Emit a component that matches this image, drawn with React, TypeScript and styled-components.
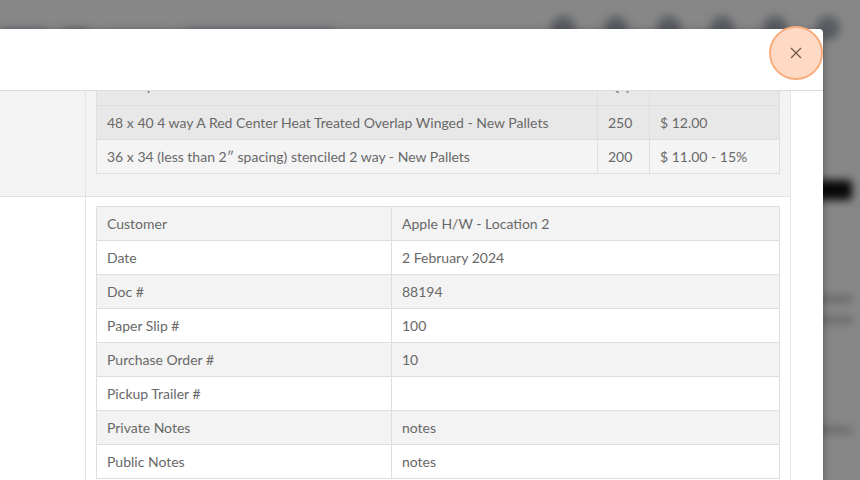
import { useEffect, useRef } from 'react'
import styled, { createGlobalStyle } from 'styled-components'

const GlobalStyle = createGlobalStyle`
  html, body {
    margin: 0;
    height: 100%;
    overflow: hidden;
  }
  body {
    font-family: Lato, "Open Sans", "Liberation Sans", sans-serif;
    background: #fff;
  }
`

const Screen = styled.div`
  position: relative;
  width: 100vw;
  height: 100vh;
  overflow: hidden;
  background: #fff;
`

// blurred page that sits behind the dialog
const Backdrop = styled.div`
  display: flex;
  flex-direction: column;
  height: 100%;
  filter: blur(4px);
`

const TopBar = styled.div`
  display: flex;
  align-items: center;
  height: 44px;
  padding: 6px 20px 0 0;
  gap: 18px;
`

const NavLink = styled.span<{ $w: number; $tone?: 'link' | 'dark' | 'field' }>`
  display: block;
  width: ${({ $w }) => $w}px;
  height: 9px;
  margin-top: 10px;
  border-radius: 3px;
  background: ${({ $tone }) =>
    $tone === 'dark' ? '#555' : $tone === 'field' ? '#f4f4f4' : '#5b7fa8'};
  opacity: ${({ $tone }) => ($tone === 'field' ? 1 : 0.45)};
`

const IconRow = styled.div`
  display: flex;
  gap: 29px;
  margin-left: auto;
`

const IconBlob = styled.span`
  display: block;
  width: 24px;
  height: 24px;
  border-radius: 50%;
  background: #3b4a63;
  opacity: 0.45;
`

const PageBody = styled.div`
  display: flex;
  justify-content: flex-end;
  flex: 1;
  padding-right: 8px;
`

const SideColumn = styled.div`
  display: flex;
  flex-direction: column;
  align-items: flex-end;
  width: 120px;
  padding-top: 130px;
`

const DarkButton = styled.span`
  display: block;
  width: 110px;
  height: 20px;
  border-radius: 3px;
  background: #111;
`

const TextLine = styled.span<{ $gap: number }>`
  display: block;
  width: 40px;
  height: 6px;
  margin-top: ${({ $gap }) => $gap}px;
  background: #bbb;
`

const Overlay = styled.div`
  position: absolute;
  inset: 0;
  background: rgba(0, 0, 0, 0.47);
`

const Modal = styled.div`
  position: absolute;
  top: 29px;
  left: -4px;
  width: 827px;
  bottom: 0;
  display: flex;
  flex-direction: column;
  background: #fff;
  border-radius: 4px 4px 0 0;
  box-shadow: 0 2px 8px rgba(0, 0, 0, 0.35);
`

const ModalHeader = styled.div`
  display: flex;
  justify-content: flex-end;
  align-items: flex-start;
  height: 61px;
  flex-shrink: 0;
  border-bottom: 1px solid #dcdcdc;
`

const CloseButton = styled.button`
  display: flex;
  align-items: center;
  justify-content: center;
  width: 54px;
  height: 54px;
  margin-top: -3px;
  padding: 0;
  border-radius: 50%;
  border: 2px solid #f8ab7b;
  background: #fedac5;
  cursor: pointer;
`

const ModalBody = styled.div`
  flex: 1;
  overflow: hidden;
  padding: 0 32px 0 4px;
`

const Sheet = styled.div`
  border-right: 1px solid #e4e4e4;
`

const Section = styled.div<{ $shade?: boolean }>`
  display: grid;
  grid-template-columns: 86px 1fr;
  background: ${({ $shade }) => ($shade ? '#f3f3f3' : '#fff')};
  border-bottom: 1px solid #e2e2e2;
`

const SideCell = styled.div`
  border-right: 1px solid #e4e4e4;
`

const MainCell = styled.div<{ $top: number; $bottom: number }>`
  padding: ${({ $top }) => $top}px 10px ${({ $bottom }) => $bottom}px 10px;
`

const Table = styled.table`
  width: 100%;
  border-collapse: collapse;
  table-layout: fixed;
  border: 1px solid #dedede;
  font-size: 14px;
  color: #686868;
`

const Row = styled.tr<{ $bg: string }>`
  background: ${({ $bg }) => $bg};
`

const Cell = styled.td`
  padding: 7px 10px;
  line-height: 19px;
  border: 1px solid #dedede;
  white-space: nowrap;
  overflow: hidden;
`

const HeadCell = styled.th`
  padding: 4px 10px 10px;
  line-height: 19px;
  border: 1px solid #dedede;
  text-align: left;
  font-weight: 700;
  color: #8a8a8a;
`

const items = [
  { desc: '48 x 40 4 way A Red Center Heat Treated Overlap Winged - New Pallets', qty: 250, price: '$ 12.00' },
  { desc: '36 x 34 (less than 2\u2033 spacing) stenciled 2 way - New Pallets', qty: 200, price: '$ 11.00 - 15%' },
]

const details: [string, string][] = [
  ['Customer', 'Apple H/W - Location 2'],
  ['Date', '2 February 2024'],
  ['Doc #', '88194'],
  ['Paper Slip #', '100'],
  ['Purchase Order #', '10'],
  ['Pickup Trailer #', ''],
  ['Private Notes', 'notes'],
  ['Public Notes', 'notes'],
]

const App = () => {
  const bodyRef = useRef<HTMLDivElement>(null)

  useEffect(() => {
    if (bodyRef.current) bodyRef.current.scrollTop = 28
  }, [])

  return (
    <Screen>
      <GlobalStyle />
      <Backdrop>
        <TopBar>
          <NavLink $w={45} />
          <NavLink $w={25} $tone="dark" />
          <NavLink $w={60} $tone="field" />
          <NavLink $w={150} />
          <IconRow>
            <IconBlob />
            <IconBlob />
            <IconBlob />
            <IconBlob />
            <IconBlob />
            <IconBlob />
          </IconRow>
        </TopBar>
        <PageBody>
          <SideColumn>
            <DarkButton />
            <TextLine $gap={96} />
            <TextLine $gap={15} />
            <TextLine $gap={104} />
          </SideColumn>
        </PageBody>
      </Backdrop>
      <Overlay />
      <Modal>
        <ModalHeader>
          <CloseButton aria-label="Close">
            <svg width="12" height="12" viewBox="0 0 12 12">
              <path d="M1 1 L11 11 M11 1 L1 11" stroke="#6a574b" strokeWidth="1.2" fill="none" />
            </svg>
          </CloseButton>
        </ModalHeader>
        <ModalBody ref={bodyRef}>
          <Sheet>
            <Section $shade>
              <SideCell />
              <MainCell $top={8} $bottom={22}>
                <Table>
                  <colgroup>
                    <col />
                    <col style={{ width: 52 }} />
                    <col style={{ width: 130 }} />
                  </colgroup>
                  <thead>
                    <Row $bg="#e8e8e8">
                      <HeadCell>Description</HeadCell>
                      <HeadCell>Qty</HeadCell>
                      <HeadCell>Price</HeadCell>
                    </Row>
                  </thead>
                  <tbody>
                    {items.map((item, i) => (
                      <Row key={i} $bg={i % 2 === 0 ? '#e8e8e8' : '#f4f4f4'}>
                        <Cell>{item.desc}</Cell>
                        <Cell>{item.qty}</Cell>
                        <Cell>{item.price}</Cell>
                      </Row>
                    ))}
                  </tbody>
                </Table>
              </MainCell>
            </Section>
            <Section>
              <SideCell />
              <MainCell $top={9} $bottom={20}>
                <Table>
                  <colgroup>
                    <col style={{ width: 295 }} />
                    <col />
                  </colgroup>
                  <tbody>
                    {details.map(([label, value], i) => (
                      <Row key={label} $bg={i % 2 === 0 ? '#f3f3f3' : '#fff'}>
                        <Cell>{label}</Cell>
                        <Cell>{value}</Cell>
                      </Row>
                    ))}
                  </tbody>
                </Table>
              </MainCell>
            </Section>
          </Sheet>
        </ModalBody>
      </Modal>
    </Screen>
  )
}

export default App
